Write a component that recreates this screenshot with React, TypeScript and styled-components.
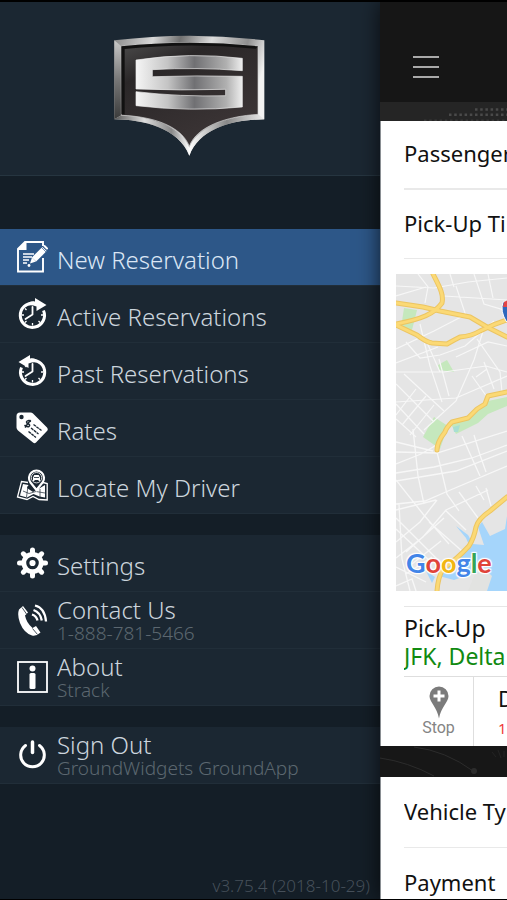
import React from "react";
import styled, { createGlobalStyle } from "styled-components";

const GlobalStyle = createGlobalStyle`
  *, *::before, *::after { box-sizing: border-box; }
  body { margin: 0; background: #141e27; font-family: "Noto Sans", sans-serif; }
`;

const Screen = styled.div`
  display: grid;
  grid-template-columns: minmax(0, 1fr) 127px;
  grid-template-rows: minmax(0, 1fr);
  height: 100vh;
  border-top: 2px solid #000;
  border-bottom: 1px solid #000;
  overflow: hidden;
`;

/* ---------- Drawer ---------- */

const Drawer = styled.aside`
  display: flex;
  flex-direction: column;
  background: #141e27;
`;

const Brand = styled.header`
  display: flex;
  justify-content: center;
  padding: 33px 0 18px;
  margin-bottom: 53px;
  background: #1b2732;
  border-bottom: 1px solid #263540;
`;

const Nav = styled.nav`
  display: flex;
  flex-direction: column;
  gap: 21px;
`;

const Group = styled.ul`
  list-style: none;
  margin: 0;
  padding: 0;
`;

const Item = styled.li`
  & > a { border-bottom: 1px solid #212e39; }
`;

const ItemLink = styled.a<{ $active?: boolean }>`
  display: flex;
  align-items: center;
  gap: 9px;
  height: 57px;
  padding: 0 16px;
  text-decoration: none;
  white-space: nowrap;
  color: ${(p) => (p.$active ? "#dbe6f5" : "#ccd5dd")};
  background: ${(p) => (p.$active ? "#2d5788" : "#1b2732")};
  svg { flex: none; }
`;

const ItemText = styled.span<{ $double?: boolean }>`
  display: flex;
  flex-direction: column;
  padding-top: ${(p) => (p.$double ? "0" : "5px")};
`;

const Label = styled.span`
  font-size: 24px;
  line-height: 26px;
  font-weight: 300;
`;

const Detail = styled.span`
  font-size: 19px;
  line-height: 20px;
  font-weight: 300;
  color: #5c6770;
`;

const Version = styled.p`
  margin: auto 10px 3px;
  text-align: right;
  font-size: 17px;
  line-height: 20px;
  font-weight: 300;
  color: #46505a;
`;

/* ---------- Reservation page ---------- */

const PageFrame = styled.main`
  position: relative;
  z-index: 1;
  min-width: 0;
  background: #181818;
  color: #111;
  box-shadow: 0 0 20px rgba(0, 0, 0, 0.7);
`;

const TopBar = styled.header`
  display: flex;
  align-items: center;
  height: 100px;
  padding: 30px 33px 0;
  background: #161616;
`;

const MenuButton = styled.button`
  display: flex;
  flex-direction: column;
  gap: 8px;
  width: 26px;
  padding: 0;
  border: 0;
  background: none;
  cursor: pointer;
`;

const MenuBar = styled.span`
  height: 2px;
  background: #a9a9a9;
`;

const Band = styled.div<{ $tall?: boolean }>`
  height: ${(p) => (p.$tall ? "31px" : "19px")};
  background: ${(p) => (p.$tall ? "#171717" : "#252525")};
  overflow: hidden;
  svg { display: block; }
`;

const Sheet = styled.section`
  background: #fff;
  border-left: 1px solid #8a8f93;
`;

const Field = styled.button<{ $line: number; $height: number }>`
  display: block;
  width: calc(100% - 23px);
  height: ${(p) => p.$height}px;
  margin: 0 0 0 23px;
  padding: 0 0 3px;
  border: 0;
  border-bottom: ${(p) => p.$line}px solid #e9e9e9;
  background: none;
  font: inherit;
  font-size: 22px;
  line-height: 30px;
  color: #111;
  text-align: left;
  white-space: nowrap;
  overflow: hidden;
`;

const MapBox = styled.div`
  position: relative;
  height: 317px;
  margin: 15px 0 15px 15px;
  overflow: hidden;
  background: #e6e6e6;
  svg { display: block; }
`;

const MapCredit = styled.div`
  position: absolute;
  left: 10px;
  bottom: 10px;
  font-family: Lato, sans-serif;
  font-size: 27px;
  line-height: 36px;
  font-weight: 700;
  text-shadow: 0 0 2px #fff, 1px 1px 1px #fff, -1px -1px 1px #fff, 1px -1px 1px #fff, -1px 1px 1px #fff;
`;

const Tint = styled.span<{ $c: string }>`
  color: ${(p) => p.$c};
`;

const Stopover = styled.div`
  margin-left: 23px;
  padding: 7px 0 6px;
  border-top: 1px solid #e6e6e6;
  border-bottom: 1px solid #dedede;
  font-size: 23px;
  line-height: 28px;
  white-space: nowrap;
  overflow: hidden;
`;

const Place = styled.div`
  color: #118a11;
`;

const StopRow = styled.div`
  display: flex;
  height: 69px;
  margin-left: 23px;
  overflow: hidden;
`;

const StopButton = styled.button`
  display: flex;
  flex: none;
  flex-direction: column;
  align-items: center;
  justify-content: flex-start;
  width: 70px;
  padding: 9px 0 0;
  border: 0;
  border-right: 1px solid #dedede;
  background: none;
  font-family: Roboto, sans-serif;
  font-size: 16px;
  line-height: 18px;
  color: #848484;
`;

const DropOff = styled.div`
  display: flex;
  flex-direction: column;
  padding: 6px 0 0 24px;
  font-size: 22px;
  line-height: 30px;
`;

const Warning = styled.span`
  font-size: 15px;
  color: #f03a3a;
`;

/* ---------- Drawings ---------- */

const Logo = () => (
  <svg width="152" height="122" viewBox="72 46 456 366" role="img" aria-label="Strack">
    <defs>
      <linearGradient id="rim" x1="0" y1="0" x2="1" y2="0.25">
        <stop offset="0" stopColor="#8a8a8a" />
        <stop offset="0.25" stopColor="#d8d8d8" />
        <stop offset="0.42" stopColor="#707070" />
        <stop offset="0.62" stopColor="#dcdcdc" />
        <stop offset="0.85" stopColor="#8f8f8f" />
        <stop offset="1" stopColor="#f2f2f2" />
      </linearGradient>
      <linearGradient id="side" x1="0" y1="0" x2="0" y2="1">
        <stop offset="0" stopColor="#c9c9c9" />
        <stop offset="0.5" stopColor="#777" />
        <stop offset="1" stopColor="#3a3a3a" />
      </linearGradient>
      <linearGradient id="plate" x1="0" y1="0" x2="0.6" y2="1">
        <stop offset="0" stopColor="#4c4c4c" />
        <stop offset="0.3" stopColor="#2a2728" />
        <stop offset="1" stopColor="#3c3536" />
      </linearGradient>
      <linearGradient id="sTop" x1="0" y1="0" x2="1" y2="0">
        <stop offset="0" stopColor="#f5f5f5" />
        <stop offset="0.3" stopColor="#c4c4c4" />
        <stop offset="0.55" stopColor="#707073" />
        <stop offset="0.85" stopColor="#b0b0b0" />
        <stop offset="1" stopColor="#eee" />
      </linearGradient>
      <linearGradient id="tip" x1="0" y1="0" x2="1" y2="0">
        <stop offset="0" stopColor="#555" />
        <stop offset="0.2" stopColor="#ddd" />
        <stop offset="0.38" stopColor="#888" />
        <stop offset="0.5" stopColor="#fff" />
        <stop offset="0.75" stopColor="#888" />
        <stop offset="1" stopColor="#eee" />
      </linearGradient>
    </defs>
    <path d="M73 62Q298 34 523 62V299C430 300 330 325 298 408C266 325 160 300 73 299Z" fill="url(#rim)" />
    <path d="M73 62L94 80V287L73 299Z" fill="url(#side)" />
    <path d="M73 299L94 287C190 290 275 325 298 384C320 325 410 290 504 284L523 299C430 300 330 325 298 408C266 325 160 300 73 299Z" fill="url(#tip)" />
    <path d="M94 80Q298 58 504 80V284C410 290 320 320 298 380C275 320 190 290 94 287Z" fill="url(#plate)" stroke="#d5d5d5" strokeWidth="2" />
    <path d="M94 80Q298 58 504 80L497 87Q298 67 104 88V284H94Z" fill="#111" />
    <path d="M138 121Q298 97 457 116V153Q320 142 187 150V171Q320 167 457 170V262Q298 277 138 258V216Q270 232 407 228V209Q270 213 138 208Z" fill="url(#sTop)" stroke="#eee" strokeWidth="2" />
  </svg>
);

const Icon = ({ children }: { children: React.ReactNode }) => (
  <svg width="32" height="32" viewBox="0 0 32 32" fill="none" stroke="#fff" aria-hidden="true">
    {children}
  </svg>
);

const NoteIcon = () => (
  <Icon>
    <path d="M27 17V30.500H2V8L9 1H27V5" strokeWidth="1.900" />
    <path d="M2 9V8L9 1H10.500V9Z" fill="#fff" stroke="none" />
    <path d="M7 13H18M7 16H16M7 19H13M7 22H11" strokeWidth="1.300" />
    <path d="M28.500 8L18 18.500" strokeWidth="6" />
    <path d="M16 16.500L20 20.500L14 22.500Z" fill="#fff" stroke="none" />
    <path d="M25.500 6.500L30 11" stroke="#2d5788" strokeWidth="0.700" />
    <circle cx="13" cy="24.500" r="1.400" fill="#fff" stroke="none" />
    <path d="M28.500 5L31 7.500" strokeWidth="2" strokeLinecap="round" />
  </Icon>
);

const ClockFace = () => (
  <>
    <path d="M16.500 9V16.500L9.500 21" strokeWidth="1.800" strokeLinecap="round" strokeLinejoin="round" />
    <path d="M16.500 25V27.500M6 17H8M25 17H27M9 10.500L10.500 12M22.500 23L24 24.500M9 24.500L10.500 23" strokeWidth="1.300" />
  </>
);

const ActiveIcon = () => (
  <Icon>
    <path d="M18 5.300A12.100 12.100 0 1 0 27.500 12.500" strokeWidth="3" />
    <path d="M9 8.500Q13 2.500 19 3.500V0L30.500 7L20.500 13V8.500Q14 6 9 8.500Z" fill="#fff" stroke="none" />
    <ClockFace />
  </Icon>
);

const PastIcon = () => (
  <Icon>
    <path d="M15 5.300A12.100 12.100 0 1 1 5.500 12.500" strokeWidth="3" />
    <path d="M24 8.500Q20 2.500 14 3.500V0L2.500 7L12.500 13V8.500Q19 6 24 8.500Z" fill="#fff" stroke="none" />
    <ClockFace />
  </Icon>
);

const TagIcon = () => (
  <Icon>
    <path
      d="M4 0.500H14.500Q16 0.500 17 1.500L31 15.500Q32.500 17.500 31 19L20 30.500Q18.500 32 17 30.500L2 18.500Q0.500 17 0.500 15.500V4Q0.500 0.500 4 0.500Z"
      fill="#fff"
      stroke="none"
    />
    <circle cx="5.500" cy="5" r="2.200" fill="#1b2732" stroke="none" />
    <path d="M17.500 12.500L25.500 18.500M15 16L22.500 22M12.500 19.500L20 25.500" stroke="#1b2732" strokeWidth="1.300" strokeDasharray="3 0.600" />
    <path d="M15 9.500Q11.500 7.500 10.500 10Q10.500 11.500 12.500 12Q14.500 13 13 14.500Q11 15.500 8.500 13M14.500 8L9 15.500" stroke="#1b2732" strokeWidth="1.500" />
  </Icon>
);

const LocateIcon = () => (
  <Icon>
    <path d="M12 13.500L5.500 12.500L1.500 28L11 30.500L17 27.500L23 30.500L31.200 31V14.500L27 13.500" strokeWidth="1.300" />
    <path d="M7 15L12.500 16L11 19L17 23L24 19L29 16V28.500L23.500 27.500L17.500 25L11 28.500L4 26.500Z" fill="#fff" stroke="none" />
    <path d="M12 17L10.500 28M24 20V28M7 22L13 24.500L20 22.500L29 24" stroke="#1b2732" strokeWidth="0.700" />
    <path d="M20.500 21L14.500 13.500A7.500 7.500 0 1 1 26.500 13.500Z" fill="#1b2732" strokeWidth="2.200" />
    <circle cx="20.500" cy="8.700" r="5.200" strokeWidth="0.800" />
    <path d="M17 12V8.500L18.300 6H22.700L24 8.500V12H22.500V11H18.500V12Z" fill="#fff" stroke="none" />
    <path d="M18 8.500H23" stroke="#1b2732" strokeWidth="0.800" />
  </Icon>
);

const GearIcon = () => (
  <Icon>
    <path
      d="M16.500 3V29M3.500 16H29.500M7.300 6.800L25.700 25.200M7.300 25.200L25.700 6.800"
      strokeWidth="5"
      strokeLinecap="round"
    />
    <circle cx="16.500" cy="16" r="11" fill="#fff" stroke="none" />
    <circle cx="16.500" cy="16" r="4.700" fill="#fff" stroke="#1b2732" strokeWidth="3.200" />
  </Icon>
);

const PhoneIcon = () => (
  <Icon>
    <path
      d="M3 5.500L7 2L12 8.500L9 11.500Q10.500 19 16.500 24L20 22L24.500 28.500Q20.500 32.500 16 31.500Q8 29 4 19Q1 11 3 5.500Z"
      fill="#fff"
      stroke="none"
    />
    <path d="M6 3.500L10.500 10M16.500 24.500L21.500 30.500" stroke="#1b2732" strokeWidth="0.800" />
    <path d="M19 1.500Q29 4 30 17.500M17.500 6Q24.500 8.500 25.800 16.500M16 10.500Q20.500 12 21.500 16.500" strokeWidth="2.300" />
  </Icon>
);

const InfoIcon = () => (
  <Icon>
    <rect x="2" y="1" width="29" height="30" strokeWidth="1.800" />
    <circle cx="16.500" cy="7.500" r="3" fill="#fff" stroke="none" />
    <rect x="13.500" y="12" width="6" height="16" rx="1.500" fill="#fff" stroke="none" />
  </Icon>
);

const PowerIcon = () => (
  <Icon>
    <path d="M9.500 6.500A11.800 11.800 0 1 0 23.500 6.500" strokeWidth="3" strokeLinecap="round" />
    <path d="M16.500 3V13.500" strokeWidth="3.500" strokeLinecap="round" />
  </Icon>
);

const StopPin = () => (
  <svg width="20" height="33" viewBox="0 0 20 33" aria-hidden="true">
    <path d="M10 0.500A9.500 9.500 0 0 1 19.500 10C19.500 16 12 21 10 32.500C8 21 0.500 16 0.500 10A9.500 9.500 0 0 1 10 0.500Z" fill="#7b7b7b" />
    <path d="M10 4.500V15.500M4.500 10H15.500" stroke="#fff" strokeWidth="3" />
  </svg>
);

const DotTexture = () => (
  <svg width="127" height="19" viewBox="0 0 127 19" aria-hidden="true">
    <path d="M95 7.500H127" stroke="#4a4a4a" strokeWidth="2.500" strokeDasharray="2.500 2.700" />
    <path d="M69 12.800H127" stroke="#4a4a4a" strokeWidth="2.500" strokeDasharray="2.500 2.700" />
    <path d="M44 18.300H127" stroke="#383838" strokeWidth="1.500" strokeDasharray="2.500 2.700" />
  </svg>
);

const LineTexture = () => (
  <svg width="127" height="31" viewBox="0 0 127 31" fill="none" aria-hidden="true">
    <path d="M0 12Q28 16 54 30M34 1Q66 5 93 25" stroke="#2c2c2c" />
    <circle cx="94" cy="25" r="3" fill="#2c2c2c" />
    <path d="M112 6L116 11M118 4L121 12M124 5V11" stroke="#242424" />
  </svg>
);

const roads = [
  "M37 0C43 12 48 20 46 29C38 40 26 45 0 50",
  "M0 29L27 33L44 37L74 43L91 53L111 63",
  "M0 51L21 61Q30 68 36 69L51 70Q58 66 64 63Q76 62 84 57Q98 50 111 46",
  "M111 118L92 122L89 130L81 135L72 144L56 148Q50 154 49 158Q41 168 41 176",
  "M111 223L94 237Q82 245 80 253Q78 264 73 272Q62 284 47 295Q42 303 41 317",
];

const CityMap = () => (
  <svg width="111" height="317" viewBox="0 0 111 317" fill="none" role="img" aria-label="Pick-up area map">
    <rect width="111" height="317" fill="#e5e5e5" />
    <g fill="#c5e8bd">
      <path d="M8 34L21 36L16 56L5 54Z" />
      <path d="M42 91L51 86L58 98L43 96Z" />
      <path d="M27 163L38 143L52 152L44 175Z" />
      <path d="M55 150L74 145L92 127L111 123V132L92 140L82 149L60 160Z" />
    </g>
    <path d="M57 153L64 151L62 158L58 158Z" fill="#a8dfd2" />
    <path
      d="M60 252L72 261L77 270L88 271L82 253L86 248L94 262L109 255L111 242V317H76L82 299L94 294L82 293L72 301L58 306L43 302L49 292L63 284L74 273L70 264Z"
      fill="#a5d5fb"
    />
    <path d="M72 317L78 302Q88 294 96 302L91 317Z" fill="#e2e3e1" />
    <path d="M30 297L39 303L36 309Z" fill="#a5d5fb" />
    <g stroke="#f7f7f7" strokeWidth="1.200">
      <path d="M0 12L38 14L72 8L111 4M22 0L32 13L29 29M54 0L58 13M78 0L88 30L111 37M92 0L97 24M48 22L111 26M60 12L70 42M0 22L30 13" />
      <path d="M0 75L38 57L65 43M10 68L24 84L44 81L69 72L98 47M0 98H48L90 92L111 98M24 50L34 92L46 128M43 85L53 122M29 64L44 98M81 65L104 98L106 118" />
      <path d="M0 89L42 73M0 128L60 124L111 102M28 156L60 127L78 86L88 54M60 83L92 68L111 72M80 103L91 95M88 88L98 115M76 102L91 123" />
      <path d="M0 110L38 148M8 100L48 137M0 130L28 160M0 145L20 163M6 151L30 122M0 141L20 115M14 161L38 131" />
    </g>
    <g stroke="#f7f7f7" strokeWidth="1.300">
      <path d="M0 178L41 179L111 157M0 168L37 177M0 190L25 180L44 169M0 199L38 193L76 184L111 171M0 207L60 197L111 177M17 155L22 202L28 230M41 178L51 220L63 237M78 161L84 181L90 198M66 162L84 202" />
      <path d="M0 230L29 227L52 217L111 192M0 236L20 231L40 226M0 206L27 240L53 270M0 268L24 248L41 226M0 284L27 263L50 236L92 216M10 278L48 244M33 248L66 277M49 236L70 256M63 218L82 244M80 212L88 226M90 214L95 232M0 244L50 294M0 255L36 289M3 230L6 285L14 317M16 290L45 267M0 293L30 308M10 300L36 283M20 317L16 305L0 312" />
    </g>
    <g strokeLinecap="round" strokeLinejoin="round">
      {roads.map((d) => <path key={d} d={d} stroke="#ecc562" strokeWidth="5" />)}
      {roads.map((d) => <path key={d} d={d} stroke="#fbd975" strokeWidth="3" />)}
    </g>
    <path d="M107 28Q104 37 110 47L116 52V27Z" fill="#2e68bd" stroke="#fff" />
    <path d="M108 28L114 25V33H107Z" fill="#e34646" />
  </svg>
);

/* ---------- Content ---------- */

type Entry = { label: string; detail?: string; icon: React.ReactNode; href: string; active?: boolean };

const groups: Entry[][] = [
  [
    { label: "New Reservation", icon: <NoteIcon />, href: "#new", active: true },
    { label: "Active Reservations", icon: <ActiveIcon />, href: "#active" },
    { label: "Past Reservations", icon: <PastIcon />, href: "#past" },
    { label: "Rates", icon: <TagIcon />, href: "#rates" },
    { label: "Locate My Driver", icon: <LocateIcon />, href: "#locate" },
  ],
  [
    { label: "Settings", icon: <GearIcon />, href: "#settings" },
    { label: "Contact Us", detail: "1-888-781-5466", icon: <PhoneIcon />, href: "tel:18887815466" },
    { label: "About", detail: "Strack", icon: <InfoIcon />, href: "#about" },
  ],
  [{ label: "Sign Out", detail: "GroundWidgets GroundApp", icon: <PowerIcon />, href: "#signout" }],
];

export default function App() {
  return (
    <>
      <GlobalStyle />
      <Screen>
        <Drawer>
          <Brand><Logo /></Brand>
          <Nav>
            {groups.map((group) => (
              <Group key={group[0].label}>
                {group.map((e) => (
                  <Item key={e.label}>
                    <ItemLink href={e.href} $active={e.active} aria-current={e.active ? "page" : undefined}>
                      {e.icon}
                      <ItemText $double={!!e.detail}>
                        <Label>{e.label}</Label>
                        {e.detail && <Detail>{e.detail}</Detail>}
                      </ItemText>
                    </ItemLink>
                  </Item>
                ))}
              </Group>
            ))}
          </Nav>
          <Version>v3.75.4 (2018-10-29)</Version>
        </Drawer>
        <PageFrame>
          <TopBar>
            <MenuButton aria-label="Menu"><MenuBar /><MenuBar /><MenuBar /></MenuButton>
          </TopBar>
          <Band><DotTexture /></Band>
          <Sheet>
            <Field $line={2} $height={69}>Passenger</Field>
            <Field $line={1} $height={69}>Pick-Up Ti</Field>
            <MapBox>
              <CityMap />
              <MapCredit>
                <Tint $c="#4285e8">G</Tint><Tint $c="#e0443a">o</Tint><Tint $c="#f2b614">o</Tint>
                <Tint $c="#4285e8">g</Tint><Tint $c="#35a454">l</Tint><Tint $c="#e0443a">e</Tint>
              </MapCredit>
            </MapBox>
            <Stopover>
              <div>Pick-Up</div>
              <Place>JFK, Delta</Place>
            </Stopover>
            <StopRow>
              <StopButton><StopPin />Stop</StopButton>
              <DropOff>D<Warning>1</Warning></DropOff>
            </StopRow>
          </Sheet>
          <Band $tall><LineTexture /></Band>
          <Sheet>
            <Field $line={1} $height={71}>Vehicle Ty</Field>
            <Field $line={1} $height={71}>Payment</Field>
          </Sheet>
        </PageFrame>
      </Screen>
    </>
  );
}
